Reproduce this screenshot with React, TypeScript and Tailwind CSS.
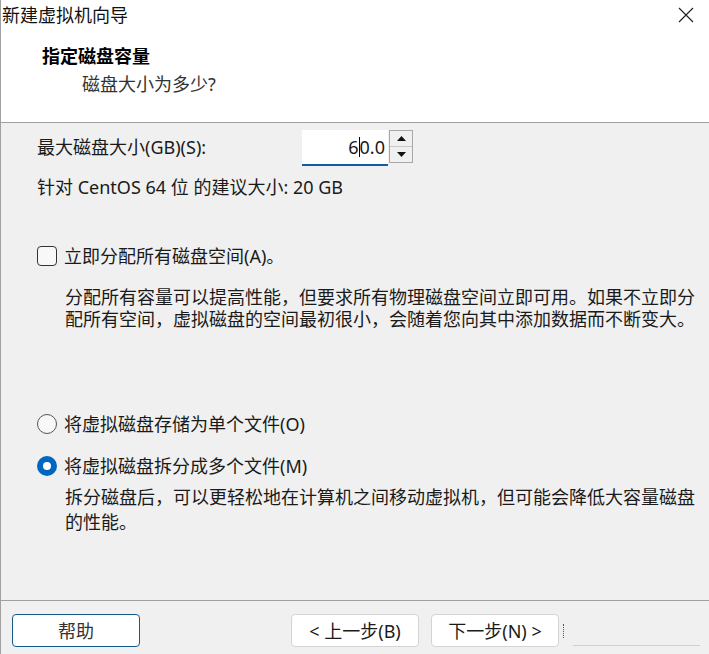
import React from "react";

const font = "font-['Noto_Sans','Noto_Sans_CJK_SC',sans-serif]";

function Spinner() {
  return (
    <div className="ml-px flex h-[33px] w-[24px] flex-col border border-[#a8a8a8] bg-[#f0f0f0]">
      <div className="flex flex-1 items-center justify-center border-b border-[#c8c8c8]">
        <svg width="9" height="5" viewBox="0 0 9 5">
          <path d="M0 5 L4.5 0 L9 5 Z" fill="#111" />
        </svg>
      </div>
      <div className="flex flex-1 items-center justify-center">
        <svg width="9" height="5" viewBox="0 0 9 5">
          <path d="M0 0 L9 0 L4.5 5 Z" fill="#111" />
        </svg>
      </div>
    </div>
  );
}

export default function App() {
  return (
    <div
      className={`flex h-[654px] w-[709px] flex-col overflow-hidden border-l border-[#a0a0a0] bg-white text-[18px] text-[#1a1a1a] ${font}`}
    >
      {/* Header */}
      <div className="flex h-[122px] flex-col bg-white">
        <div className="flex h-[30px] items-center justify-between pl-[1px] pr-[14px]">
          <span className="leading-[30px] text-[#111]">新建虚拟机向导</span>
          <svg width="16" height="16" viewBox="0 0 16 16" className="mr-[1px]">
            <path d="M1 1 L15 15 M15 1 L1 15" stroke="#222" strokeWidth="1.2" fill="none" />
          </svg>
        </div>
        <div className="mt-[14px] pl-[41px] font-bold leading-[24px] text-black">指定磁盘容量</div>
        <div className="mt-[4px] pl-[81px] leading-[24px] text-[#333]">磁盘大小为多少?</div>
      </div>
      <div className="h-px bg-[#a0a0a0]" />

      {/* Body */}
      <div className="flex flex-1 flex-col bg-[#f0f0f0] pl-[36px]">
        <div className="mt-[7px] flex h-[36px] items-start">
          <div className="w-[265px] pt-[5px] leading-[24px]">最大磁盘大小(GB)(S):</div>
          <div className="flex h-[36px] w-[86px] items-center justify-end border-b-2 border-[#0f5ca8] bg-white pr-[3px] leading-[24px]">
            <span>6</span>
            <span className="inline-block h-[20px] w-px bg-black" />
            <span>0.0</span>
          </div>
          <Spinner />
        </div>

        <div className="mt-[9px] leading-[24px]">针对 CentOS 64 位 的建议大小: 20 GB</div>

        <div className="mt-[45px] flex h-[24px] items-center">
          <div className="h-[20px] w-[20px] rounded-[4px] border border-[#333] bg-[#f8f8f8]" />
          <span className="ml-[7px] leading-[24px]">立即分配所有磁盘空间(A)。</span>
        </div>

        <div className="mt-[18px] pl-[28px] leading-[22px] whitespace-nowrap">
          <div>分配所有容量可以提高性能，但要求所有物理磁盘空间立即可用。如果不立即分</div>
          <div>配所有空间，虚拟磁盘的空间最初很小，会随着您向其中添加数据而不断变大。</div>
        </div>

        <div className="mt-[82px] flex h-[24px] items-center">
          <div className="h-[20px] w-[20px] rounded-full border border-[#555] bg-[#f8f8f8]" />
          <span className="ml-[7px] leading-[24px]">将虚拟磁盘存储为单个文件(O)</span>
        </div>

        <div className="mt-[18px] flex h-[24px] items-center">
          <div className="flex h-[20px] w-[20px] items-center justify-center rounded-full bg-[#0067c0]">
            <div className="h-[8px] w-[8px] rounded-full bg-white" />
          </div>
          <span className="ml-[7px] leading-[24px]">将虚拟磁盘拆分成多个文件(M)</span>
        </div>

        <div className="mt-[7px] pl-[28px] leading-[25px] whitespace-nowrap">
          <div>拆分磁盘后，可以更轻松地在计算机之间移动虚拟机，但可能会降低大容量磁盘</div>
          <div>的性能。</div>
        </div>
      </div>

      <div className="h-px bg-[#a0a0a0]" />

      {/* Footer */}
      <div className="flex h-[53px] items-start bg-[#f0f0f0] pt-[13px]">
        <button className="ml-[11px] flex h-[33px] w-[128px] items-center justify-center rounded-[4px] border border-[#155a8a] bg-white text-[#333] leading-[24px]">
          帮助
        </button>
        <button className="ml-[151px] flex h-[33px] w-[128px] items-center justify-center rounded-[4px] border border-[#d4d4d4] bg-white leading-[24px]">
          &lt; 上一步(B)
        </button>
        <button className="ml-[12px] flex h-[33px] w-[128px] items-center justify-center rounded-[4px] border border-[#d4d4d4] bg-white leading-[24px]">
          下一步(N) &gt;
        </button>
        <div className="ml-[4px] mt-[10px] h-[14px] w-px border-l border-dotted border-[#555]" />
        <div className="ml-[9px] mt-[31px] h-px w-[127px] bg-[#d0d0d0]" />
      </div>
    </div>
  );
}
